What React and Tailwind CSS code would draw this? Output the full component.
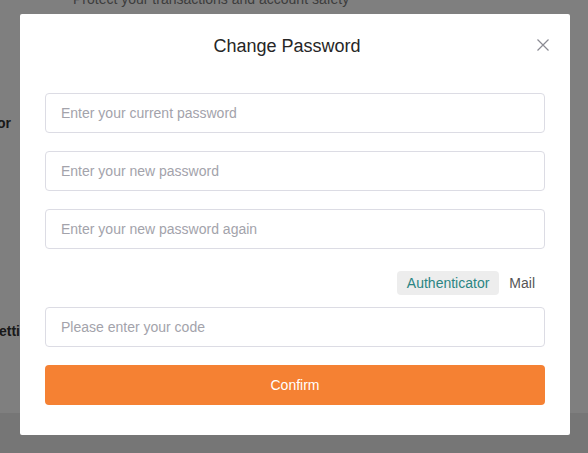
import React from "react";

export default function App() {
  const font = { fontFamily: '"Liberation Sans", Arial, sans-serif' };
  return (
    <div className="relative h-[453px] w-[588px] overflow-hidden bg-white" style={font}>
      {/* underlying page */}
      <div className="flex h-[413px] flex-col">
        <div className="mt-[-9px] pl-[73px] text-[14px] leading-[16px] text-[#7a7a7a]">
          Protect your transactions and account safety
        </div>
        <div className="mt-[108px] ml-[-160px] w-[171px] text-right text-[14px] font-bold leading-[16px] text-[#333]">
          Authenticator
        </div>
        <div className="mt-[192px] ml-[-160px] w-[180px] text-right text-[14px] font-bold leading-[16px] text-[#333] whitespace-nowrap overflow-hidden">
          Account Setti
        </div>
      </div>
      <div className="h-[40px] bg-[#ececec]" />

      {/* overlay */}
      <div className="absolute inset-0 bg-black/50" />

      {/* modal */}
      <div className="absolute left-[20px] top-[14px] flex h-[421px] w-[550px] flex-col rounded-[2px] bg-white px-[25px] pt-[20px]">
        <div className="relative flex items-center justify-center">
          <div className="mr-[16px] text-[18px] leading-[24px] text-[#262626]">Change Password</div>
          <button className="absolute right-[-4px] top-[5px] text-[#8a8a92]">
            <svg width="12" height="12" viewBox="0 0 12 12" fill="none" stroke="currentColor" strokeWidth="1.2">
              <path d="M0.5 0.5L11.5 11.5M11.5 0.5L0.5 11.5" />
            </svg>
          </button>
        </div>

        <div className="mt-[35px] flex flex-col gap-[18px]">
          {["Enter your current password", "Enter your new password", "Enter your new password again"].map((p) => (
            <input
              key={p}
              type="password"
              placeholder={p}
              className="h-[40px] w-[500px] rounded-[4px] border border-[#dcdce4] px-[15px] text-[14px] text-[#333] outline-none placeholder:text-[#a3a3ab]"
              style={font}
            />
          ))}
        </div>

        <div className="mt-[22px] flex justify-end">
          <div className="flex items-center">
            <span className="rounded-[4px] bg-[#ededed] px-[10px] text-[14px] leading-[24px] text-[#2b8583]">
              Authenticator
            </span>
            <span className="px-[10px] text-[14px] leading-[24px] text-[#555]">Mail</span>
          </div>
        </div>

        <input
          type="text"
          placeholder="Please enter your code"
          className="mt-[12px] h-[40px] w-[500px] rounded-[4px] border border-[#dcdce4] px-[15px] text-[14px] text-[#333] outline-none placeholder:text-[#a3a3ab]"
          style={font}
        />

        <button
          className="mt-[18px] h-[40px] w-[500px] rounded-[4px] bg-[#f58133] text-[14px] text-white"
          style={font}
        >
          Confirm
        </button>
      </div>
    </div>
  );
}
